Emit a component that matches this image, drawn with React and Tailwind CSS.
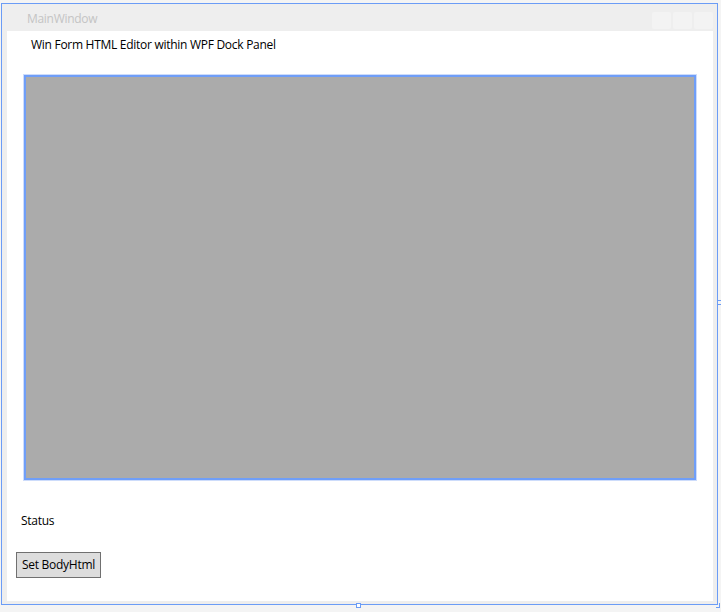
export default function App() {
  return (
    <div className="relative w-[721px] h-[612px] overflow-hidden bg-[#f4f4f4] pt-[3px] pl-[1px] font-['Open_Sans','Noto_Sans',sans-serif]">
      {/* designer selection outline */}
      <div className="w-[717px] h-[602px] border border-[#6b9cf6]">
        <div className="flex flex-col h-full bg-[#eeeeee]">
          {/* title bar */}
          <div className="h-[27px] flex items-center justify-between shrink-0">
            <span className="pl-[25px] text-[12px] text-[#c4c4c4] leading-none pt-[3px] tracking-[-0.3px]">MainWindow</span>
            <div className="flex gap-[2px] pr-[4px] pt-[5px]">
              <div className="w-[19px] h-[17px] rounded-[2px] bg-[#f3f3f3]" />
              <div className="w-[19px] h-[17px] rounded-[2px] bg-[#f3f3f3]" />
              <div className="w-[19px] h-[17px] rounded-[2px] bg-[#f3f3f3]" />
            </div>
          </div>

          {/* client area */}
          <div className="flex-1 ml-[5px] mr-[4px] mb-[3px] bg-white flex flex-col text-[12px] text-black">
            <div className="pl-[24px] pt-[6px] h-[44px] leading-[16px] tracking-[-0.28px]">
              Win Form HTML Editor within WPF Dock Panel
            </div>
            <div className="mx-[17px] h-[405px] border-2 border-[#6f9ef8] bg-[#ababab] shadow-[0_0_0_1px_#cddcfb]" />
            <div className="pl-[14px] pt-[33px] h-[72px] leading-[16px] tracking-[-0.28px]">Status</div>
            <div className="pl-[9px]">
              <button className="w-[85px] h-[26px] border border-[#707070] bg-[#dddddd] text-[12px] leading-none tracking-[-0.28px]">
                Set BodyHtml
              </button>
            </div>
          </div>
        </div>
      </div>

      {/* resize handles */}
      <div className="absolute left-[356px] top-[603px] w-[5px] h-[5px] border border-[#6b9cf6] bg-white" />
      <div className="absolute left-[716px] top-[603px] w-[4px] h-[5px] border-r border-b border-[#6b9cf6]" />
      <div className="absolute left-[717px] top-[300px] w-[4px] h-[5px] border-t border-b border-[#6b9cf6]" />
    </div>
  );
}
